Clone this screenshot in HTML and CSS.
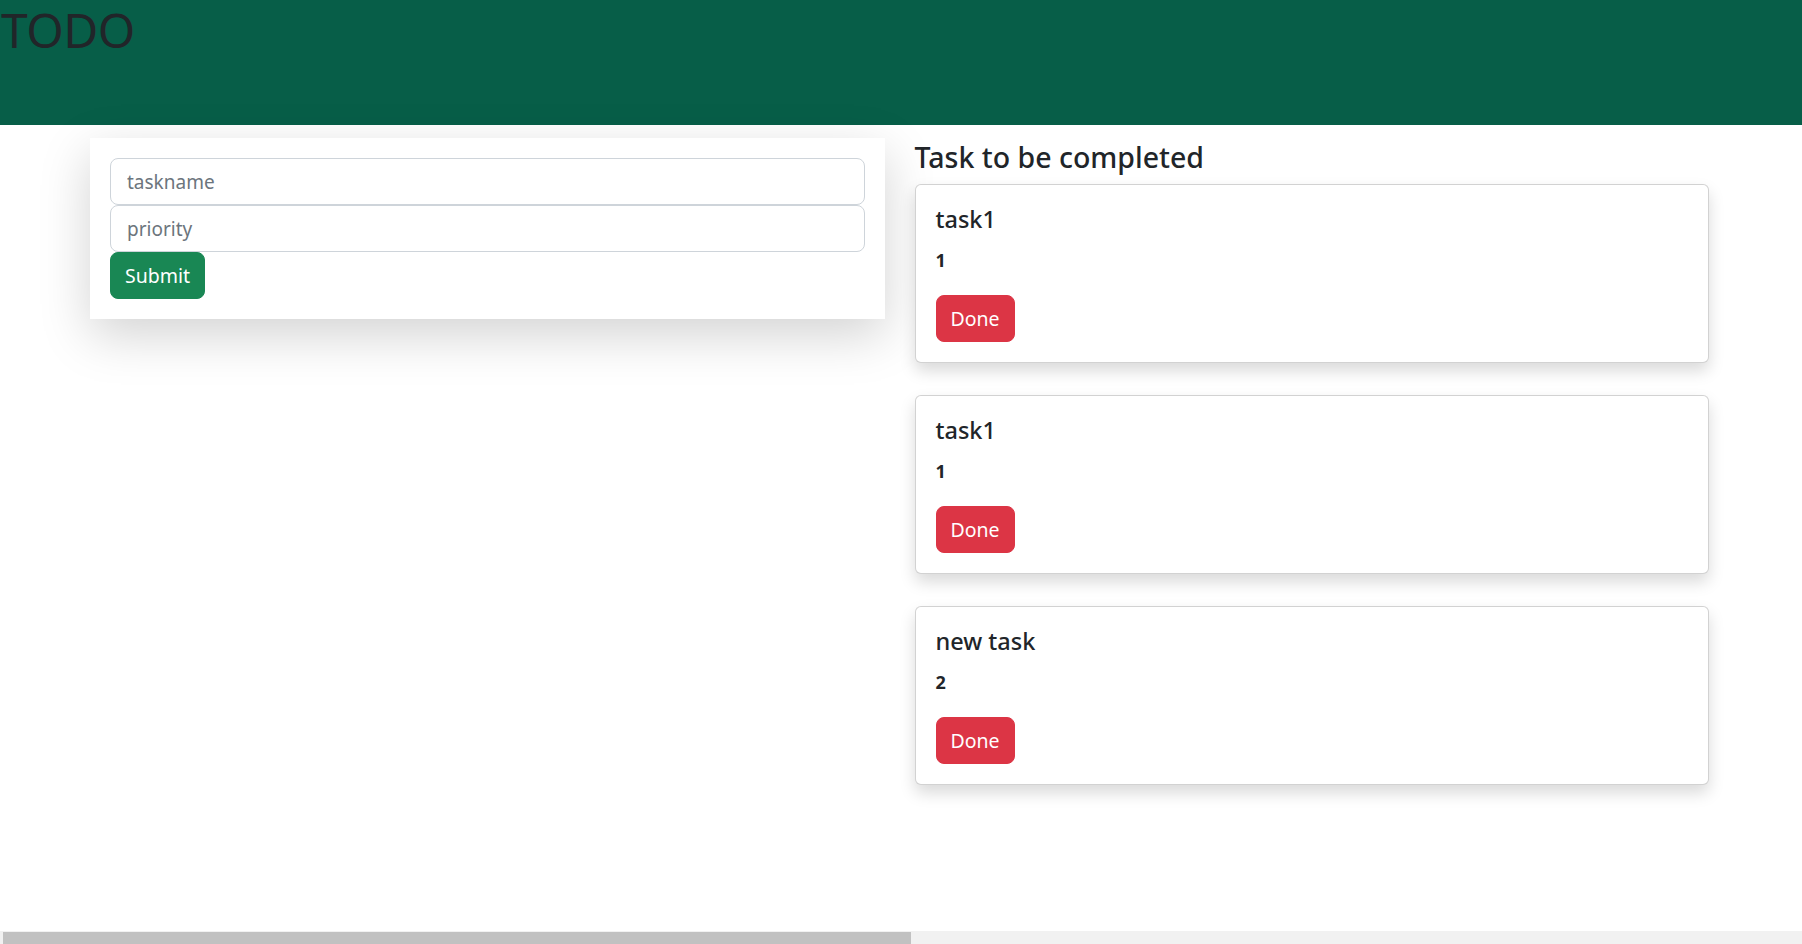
FILE: index.html
```html
<!DOCTYPE html>
<html lang="en">
<head>
<meta charset="utf-8">
<title>TODO</title>
<link rel="stylesheet" href="styles.css">
</head>
<body>
<div class="page">
  <header class="topbar">
    <h1 class="brand">TODO</h1>
  </header>
  <main class="layout">
    <section class="form-card">
      <form class="task-form">
        <input class="field" type="text" placeholder="taskname">
        <input class="field" type="text" placeholder="priority">
        <button class="btn btn-success" type="button">Submit</button>
      </form>
    </section>
    <section class="tasks">
      <h2 class="tasks-title">Task to be completed</h2>
      <div class="task-card">
        <h4 class="task-name">task1</h4>
        <div class="task-priority">1</div>
        <button class="btn btn-danger" type="button">Done</button>
      </div>
      <div class="task-card">
        <h4 class="task-name">task1</h4>
        <div class="task-priority">1</div>
        <button class="btn btn-danger" type="button">Done</button>
      </div>
      <div class="task-card">
        <h4 class="task-name">new task</h4>
        <div class="task-priority">2</div>
        <button class="btn btn-danger" type="button">Done</button>
      </div>
    </section>
  </main>
  <div class="hscroll" aria-hidden="true">
    <div class="hscroll-thumb"></div>
  </div>
</div>
</body>
</html>
```

FILE: styles.css
```css
* { box-sizing: border-box; }

html, body {
  margin: 0;
  padding: 0;
  background: #fff;
}

body {
  font-family: "Noto Sans", "Open Sans", "Liberation Sans", sans-serif;
  color: #212529;
  font-size: 16px;
  line-height: 1.5;
}

.page {
  height: 100vh;
  display: flex;
  flex-direction: column;
  overflow: hidden;
}

.topbar {
  flex: 0 0 125px;
  background: #075e48;
}

.brand {
  margin: 0;
  padding: 1px 0 0 1px;
  font-size: 48px;
  font-weight: 400;
  line-height: 1.2;
  color: #212529;
  letter-spacing: -0.5px;
}

.layout {
  flex: 1 1 auto;
  display: grid;
  grid-template-columns: minmax(0, 1fr) minmax(0, 1fr);
  align-items: start;
  column-gap: 30px;
  padding: 13px 93px 0 90px;
}

.form-card {
  background: #fff;
  padding: 20px;
  box-shadow: 0 1rem 3rem rgba(0, 0, 0, 0.175);
}

.task-form {
  display: flex;
  flex-direction: column;
  align-items: flex-start;
}

.field {
  width: 100%;
  height: 47px;
  padding: 0 16px;
  font-family: inherit;
  font-size: 19px;
  color: #212529;
  background: #fff;
  border: 1px solid #ced4da;
  border-radius: 8px;
  outline: none;
}

.field::placeholder {
  color: #6c757d;
}

.btn {
  height: 47px;
  padding: 0 14px;
  font-family: inherit;
  font-size: 19.5px;
  line-height: 45px;
  color: #fff;
  border: 1px solid transparent;
  border-radius: 8px;
  cursor: pointer;
}

.btn-success { background: #198754; border-color: #198754; }
.btn-danger { background: #dc3545; border-color: #dc3545; }

.tasks-title {
  margin: 0 0 8px;
  font-size: 28.5px;
  font-weight: 500;
  line-height: 38px;
}

.task-card {
  background: #fff;
  border: 1px solid rgba(0, 0, 0, 0.175);
  border-radius: 6px;
  padding: 20px;
  margin-bottom: 32px;
  box-shadow: 0 0.5rem 1rem rgba(0, 0, 0, 0.15);
}

.task-name {
  margin: 0 0 15px;
  font-size: 23.5px;
  font-weight: 500;
  line-height: 29px;
}

.task-priority {
  margin: 0 0 23px;
  font-size: 18px;
  font-weight: 700;
  line-height: 23px;
}

.hscroll {
  flex: 0 0 13px;
  background: #f1f1f1;
  padding: 1px 0 0 3px;
}

.hscroll-thumb {
  width: 908px;
  height: 12px;
  background: #c1c1c1;
}
```
